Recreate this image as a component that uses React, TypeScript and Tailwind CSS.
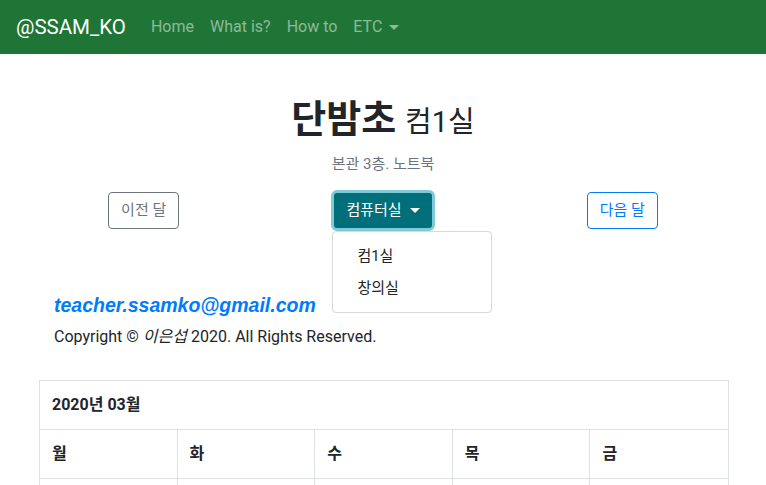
import React from "react";

const font = { fontFamily: 'Roboto, "Noto Sans CJK KR", sans-serif' };

export default function App() {
  const days = ["월", "화", "수", "목", "금"];
  return (
    <div className="min-h-[485px] bg-white text-[#212529]" style={font}>
      <nav className="flex h-[54px] items-center bg-[#1e7535] pl-4">
        <span className="mr-[25px] text-[20.5px] text-white">@SSAM_KO</span>
        <div className="flex items-center gap-[16px] text-[16px] text-white/50">
          <span>Home</span>
          <span>What is?</span>
          <span>How to</span>
          <span className="flex items-center">
            ETC
            <span className="ml-[7px] mt-[1px] h-0 w-0 border-x-[5px] border-t-[5px] border-x-transparent border-t-white/50" />
          </span>
        </div>
      </nav>

      <div className="flex flex-col items-center pt-[42px]">
        <h1 className="flex items-baseline gap-[9px] leading-tight">
          <span className="text-[38px] font-bold">단밤초</span>
          <span className="text-[29px]">컴1실</span>
        </h1>
        <p className="mt-[9px] text-[15px] text-[#6c757d]">본관 3층. 노트북</p>
      </div>

      <div className="mx-[24px] mt-[15px] grid grid-cols-3">
        <div className="flex justify-center pt-[2px]">
          <button className="h-[37px] rounded-[4px] border border-[#6c757d] px-[12px] text-[15px] text-[#6c757d]">
            이전 달
          </button>
        </div>
        <div className="flex justify-center">
          <div className="relative">
            <button className="flex h-[41px] items-center rounded-[6px] border-[3px] border-[#7fcad6] bg-[#006f79] px-[12px] text-[15px] text-white">
              컴퓨터실
              <span className="ml-[8px] h-0 w-0 border-x-[5px] border-t-[5px] border-x-transparent border-t-white" />
            </button>
            <div className="absolute left-[1px] top-[41px] w-[160px] rounded-[4px] border border-[#d9d9d9] bg-white py-[8px] text-[15px]">
              <div className="px-[24px] py-[4px] leading-[24px]">컴1실</div>
              <div className="px-[24px] py-[4px] leading-[24px]">창의실</div>
            </div>
          </div>
        </div>
        <div className="flex justify-center pt-[2px]">
          <button className="h-[37px] rounded-[4px] border border-[#007bff] px-[12px] text-[15px] text-[#007bff]">
            다음 달
          </button>
        </div>
      </div>

      <div className="ml-[54px] mt-[62px]">
        <div
          className="text-[19.5px] font-bold italic leading-[24px] text-[#007bff]"
          style={{ fontFamily: '"Liberation Sans", sans-serif' }}
        >
          teacher.ssamko@gmail.com
        </div>
        <div className="mt-[8px] text-[16px] leading-[24px]">
          Copyright © <i>이은섭</i> 2020. All Rights Reserved.
        </div>
      </div>

      <div className="ml-[39px] mr-[37px] mt-[31px] border border-[#dee2e6]">
        <div className="flex h-[49px] items-center border-b border-[#dee2e6] px-[12px] text-[16px] font-bold">
          2020년 03월
        </div>
        <div className="grid grid-cols-5">
          {days.map((d, i) => (
            <div
              key={d}
              className={`flex h-[48px] items-center px-[12px] text-[16px] font-bold ${i < 4 ? "border-r border-[#dee2e6]" : ""}`}
            >
              {d}
            </div>
          ))}
        </div>
        <div className="grid grid-cols-5 border-t border-[#dee2e6]">
          {days.map((d, i) => (
            <div key={d} className={`h-[40px] ${i < 4 ? "border-r border-[#dee2e6]" : ""}`} />
          ))}
        </div>
      </div>
    </div>
  );
}
